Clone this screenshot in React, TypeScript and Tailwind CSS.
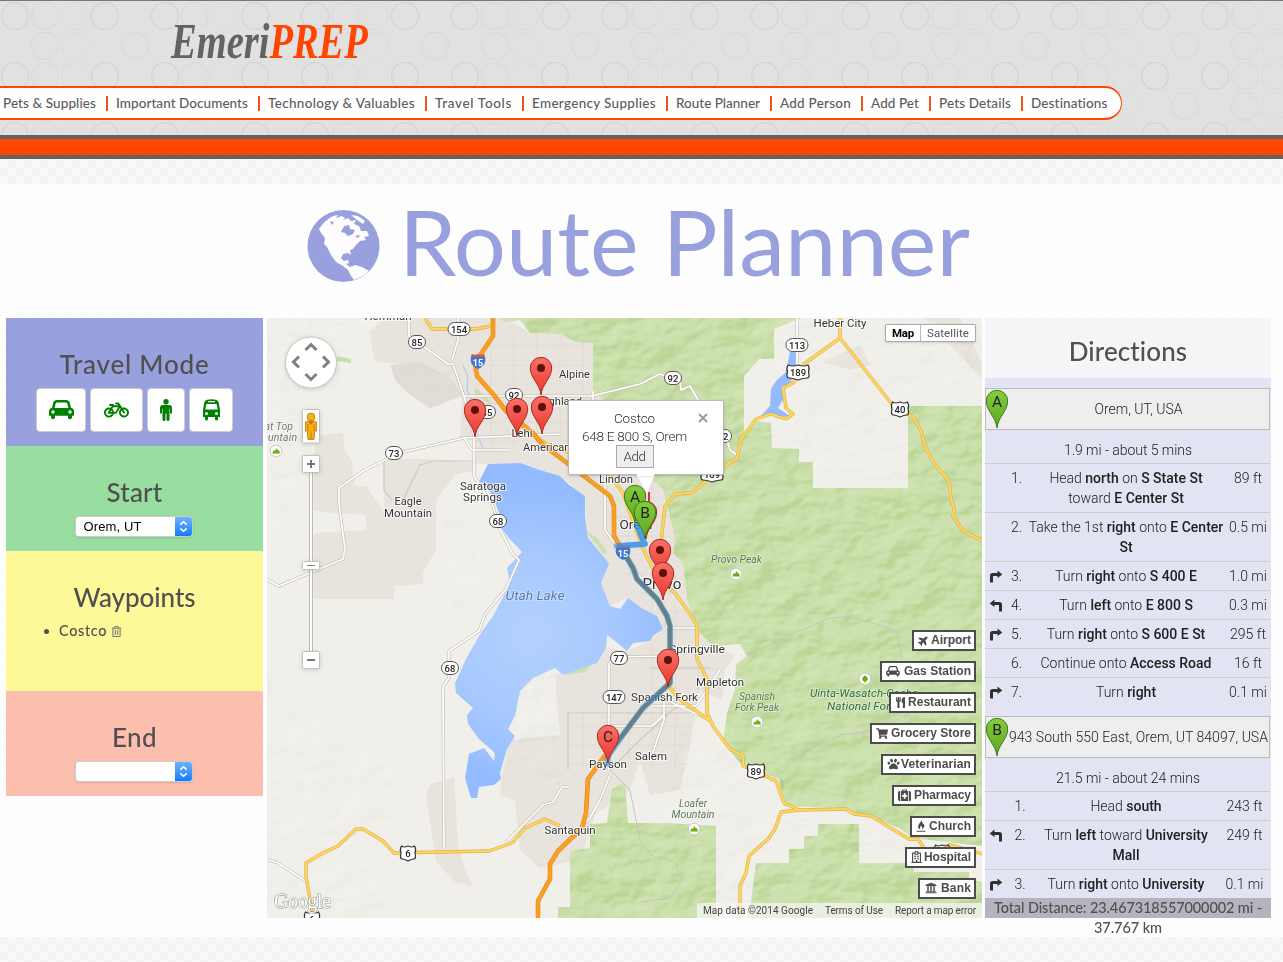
import React, { useLayoutEffect, useRef } from "react";
import {
  FaBicycle, FaPaw, FaPlane, FaRegHospital,
  FaRegTrashAlt, FaShoppingCart, FaUniversity, FaUtensils,
} from "react-icons/fa";

/* Text that is tracked out or in until it spans a given width. */
function Fit({ w, className = "", children }: { w: number; className?: string; children: React.ReactNode }) {
  const ref = useRef<HTMLSpanElement>(null);
  useLayoutEffect(() => {
    const el = ref.current;
    if (!el) return;
    el.style.letterSpacing = "0px";
    const n = (el.textContent || "").length;
    el.style.letterSpacing = (w - el.getBoundingClientRect().width) / n + "px";
  }, [w, children]);
  return <span ref={ref} className={"inline-block whitespace-nowrap " + className}>{children}</span>;
}

const NAV: [string, number, number][] = [
  ["Pets & Supplies", 93, 103], ["Important Documents", 132, 152], ["Technology & Valuables", 147, 167],
  ["Travel Tools", 77, 97], ["Emergency Supplies", 124, 144], ["Route Planner", 84, 104],
  ["Add Person", 71, 91], ["Add Pet", 48, 68], ["Pets Details", 72, 92], ["Destinations", 77, 97],
];

function Header() {
  return (
    <header className="relative flex h-[135px] w-full flex-col border-t border-[#777] bg-[#dfdfdf]">
      <svg className="absolute inset-0 h-full w-full" aria-hidden="true">
        <defs>
          <pattern id="rings" width="150" height="60" patternUnits="userSpaceOnUse">
            <g fill="none" stroke="#d3d3d3" strokeWidth="1.6">
              <circle cx="15" cy="15" r="13.5" /><circle cx="105" cy="15" r="13.5" />
              <g opacity=".55"><circle cx="45" cy="15" r="13.5" /><circle cx="45" cy="45" r="13.5" /><circle cx="135" cy="45" r="13.5" /></g>
              <g opacity=".3"><circle cx="75" cy="15" r="13.5" /><circle cx="75" cy="45" r="13.5" /></g>
            </g>
          </pattern>
          <pattern id="lines" width="4" height="2" patternUnits="userSpaceOnUse"><rect width="4" height="1" fill="#fff" opacity=".12" /></pattern>
        </defs>
        <rect width="100%" height="100%" fill="url(#rings)" />
        <rect width="100%" height="100%" fill="url(#lines)" />
      </svg>
      <div className="relative h-[85px] pl-[171px] pt-[13px]">
        <div className="inline-block origin-left scale-x-[.755] whitespace-nowrap font-['Liberation_Serif',serif] text-[51px] font-bold italic leading-[54px] text-[#636363]">
          Emeri<span className="text-[#ff4500]">PREP</span>
        </div>
      </div>
      <nav className="relative flex h-[34px] w-[1122px] items-center rounded-r-[17px] border-y-2 border-r border-[#ff4500] bg-white pl-[4px] font-[Lato,sans-serif] text-[13.5px] font-medium leading-[17px] text-[#5c5c5c]">
        {NAV.map(([t, w, box], i) => (
          <div key={t} className={i ? "flex h-[15px] shrink-0 items-center border-l-2 border-[#f4541c] pl-[9px]" : "flex shrink-0"} style={{ width: i ? box : box - 1 }}>
            <Fit w={w} className="-ml-px">{t}</Fit>
          </div>
        ))}
      </nav>
    </header>
  );
}

function Select({ value }: { value: string }) {
  return (
    <div className="mx-auto flex h-[21px] w-[118px] -translate-x-px overflow-hidden rounded-[4px] border border-[#0003] bg-white shadow-sm">
      <div className="flex-1 pl-[8px] text-left font-['Liberation_Sans',sans-serif] text-[13px] leading-[19px] text-black">{value && <Fit w={58}>{value}</Fit>}</div>
      <div className="flex w-[17px] items-center justify-center bg-linear-to-b from-[#6bb2fc] to-[#0a7bff]">
        <svg width="9" height="13" viewBox="0 0 9 13" fill="none" stroke="white" strokeWidth="1.5"><path d="M1.3 4.6 4.5 1.7 7.7 4.6M1.3 8.4 4.5 11.3 7.7 8.4" /></svg>
      </div>
    </div>
  );
}

function Heading({ w, children }: { w: number; children: string }) {
  return <h2 className="text-center font-[Lato,sans-serif] text-[26px] font-medium leading-[28px] text-[#505050]"><Fit w={w}>{children}</Fit></h2>;
}

const modeBtn = "flex h-[44px] items-center justify-center rounded-[4px] border border-[#ccc] bg-white text-[#008000]";

function Sidebar() {
  return (
    <aside className="w-[257px] shrink-0">
      <section className="h-[128px] bg-[#98a0dd] pt-[32px]">
        <Heading w={150}>Travel Mode</Heading>
        <div className="mt-[10px] flex gap-[4px] pl-[30px]">
          <div className={modeBtn + " w-[50px]"}><CarIcon className="h-[20px] w-[25px]" /></div>
          <div className={modeBtn + " w-[53px]"}><FaBicycle size={27} className="h-[20px]" /></div>
          <div className={modeBtn + " w-[38px]"}><ManIcon /></div>
          <div className={modeBtn + " w-[44px]"}><BusIcon /></div>
        </div>
      </section>
      <section className="h-[105px] bg-[#98dea1] pt-[32px]"><Heading w={56}>Start</Heading><div className="pt-[10px]"><Select value="Orem, UT" /></div></section>
      <section className="h-[140px] bg-[#fef998] pt-[32px]">
        <Heading w={122}>Waypoints</Heading>
        <div className="mt-[10px] flex h-[20px] items-center pl-[38px] font-[Lato,sans-serif] text-[14.5px] font-medium text-[#505050]">
          <span className="mr-[10px] h-[5px] w-[5px] rounded-full bg-[#505050]" /><Fit w={48}>Costco</Fit>
          <FaRegTrashAlt size={11} className="ml-[4px] text-[#777]" />
        </div>
      </section>
      <section className="h-[105px] bg-[#fcbfae] pt-[32px]"><Heading w={45}>End</Heading><div className="pt-[10px]"><Select value="" /></div></section>
    </aside>
  );
}

function GlobeIcon() {
  return (
    <svg viewBox="0 0 74 74" className="mr-[21px] mt-[25px] h-[74px] w-[74px]">
      <circle cx="36.500" cy="37" r="36" fill="currentColor" />
      <path fill="#fdfdfe" d="M12 20Q17 12 26 7L31 6 29 9 35 7 38 9 36 11 41 9 44 12 49 11 47 15 52 17 54 22 60 22 62 27 57 28 59 31 53 32 49 36 46 40 43 41 44 46 41 44 36 45 34 49 37 52 41 51 42 54 39 55 43 58 48 56 55 58 62 62Q56 68 47 71L44 67 41 61 36 57 29 53 24 46 20 38 17 35 18 29 14 24ZM44 6 51 7 58 12 56 15 50 11Z" />
      <path fill="currentColor" d="M37 17 42 16 43 20 48 21 46 25 41 27 38 24 34 23ZM23 12 27 13 25 16ZM48 27 53 26 51 29Z" />
    </svg>
  );
}
function CarIcon({ className }: { className: string }) {
  return (
    <svg viewBox="0 0 25 20" className={className} fill="currentColor">
      <path fillRule="evenodd" d="M8 0h9q3 0 3.7 2.6L22 8q3 .4 3 3.4v4.4h-2v1.4a1.9 1.9 0 0 1-4 0v-1.4H6v1.4a1.9 1.9 0 0 1-4 0v-1.4H0v-4.4Q0 8.4 3 8l1.3-5.4Q5 0 8 0Zm0 2.4q-1 0-1.3 1L5.500 8h14l-1.200-4.600q-.3-1-1.300-1ZM4 10.300a1.700 1.700 0 1 0 0 3.400 1.700 1.700 0 0 0 0-3.400Zm17 0a1.700 1.700 0 1 0 0 3.400 1.700 1.700 0 0 0 0-3.400Z" />
    </svg>
  );
}
function ManIcon() {
  return <svg width="14" height="22" viewBox="0 0 14 22" fill="currentColor"><circle cx="7" cy="2.800" r="2.700" /><path d="M4 6h6q3 0 3 3v4.500q0 1.200-1 1.200t-1-1.200V9.800h-.5v10.700q0 1.500-1.500 1.500t-1.500-1.500v-6h-1v6Q6.500 22 5 22t-1.500-1.500V9.800H3v3.700q0 1.200-1 1.200t-1-1.200V9q0-3 3-3Z" /></svg>;
}
function BusIcon() {
  return <svg width="19" height="22" viewBox="0 0 19 22" fill="currentColor"><path fillRule="evenodd" d="M5 .8Q9.500-.5 14 .8q2.500.7 2.800 3.200L18 11v7h-2v2a1.500 1.500 0 0 1-3 0v-2H6v2a1.500 1.500 0 0 1-3 0v-2H1v-7L2.200 4Q2.500 1.500 5 .8ZM6 2v1.200h7V2Zm-1.600 3L3.300 10.600h12.400L14.600 5ZM4.500 13a1.500 1.500 0 1 0 0 3 1.500 1.500 0 0 0 0-3Zm10 0a1.500 1.500 0 1 0 0 3 1.500 1.500 0 0 0 0-3Z" /></svg>;
}

function Pin({ x, y, letter, green }: { x: number; y: number; letter?: string; green?: boolean }) {
  return (
    <g transform={`translate(${x} ${y})`}>
      <path d="M0 0C-1-11-10.700-17-10.700-27A10.700 10.700 0 1 1 10.700-27C10.700-17 1-11 0 0Z" fill={green ? "url(#pg)" : "url(#pr)"} stroke={green ? "#3e7a16" : "#a52a22"} strokeWidth="1" />
      {letter ? <text y="-21.500" textAnchor="middle" fontSize="15.500" fontFamily="Roboto" fontWeight="400" fill="#222">{letter}</text> : <circle cy="-27" r="4" fill="#5e100c" />}
    </g>
  );
}
function PinDefs() {
  return (
    <>
      <linearGradient id="pg" x1="0" y1="0" x2="0" y2="1"><stop stopColor="#83cc3e" /><stop offset="1" stopColor="#5ea822" /></linearGradient>
      <linearGradient id="pr" x1="0" y1="0" x2="0" y2="1"><stop stopColor="#fa7168" /><stop offset="1" stopColor="#e9362c" /></linearGradient>
    </>
  );
}

const LAKE = "M488 464L520 463 537 469 560 476 568 484 585 496 585 516 588 538 603 556 609 564 601 583 610 606 620 609 628 598 643 609 657 616 663 629 653 636 650 641 633 643 627 651 615 641 607 635 606 648 597 663 563 675 555 668 533 678 520 691 515 716 508 729 515 736 507 749 500 773 501 779 494 785 479 787 477 798 471 798 465 778 469 754 484 748 494 761 495 754 493 751 479 739 468 724 467 715 473 708 456 693 455 683 466 659 479 636 493 616 500 603 510 584 507 568 522 552 507 536 500 526 499 513 493 496 484 484 479 482Z";
const GREEN = "M500 318L504 322 520 320 530 333 562 334 575 342 593 343 593 391 640 430 640 470 663 489 675 538 673 553 683 563 687 599 693 616 700 633 713 646 740 644 747 656 736 664 735 690 727 713 723 743 743 766 779 779 784 806 836 808 869 816 899 828 913 838 982 846 982 406 908 406 908 488 813 488 813 462 799 462 799 449 772 448 771 423 756 421 744 436 744 376 759 359 774 359 774 329 801 318ZM818 824L859 824 859 863 914 863 914 872 969 872 969 879 982 882 982 918 749 918 756 863 789 863 789 849 804 849 804 836 818 836ZM590 824L607 823 612 789 625 782 628 823 667 823 716 826 716 918 558 918 558 907 570 907 570 851 590 848Z";
const URBAN = "M369 332L385 318 505 318 530 333 562 334 593 343 593 391 640 430 640 470 663 489 675 538 673 553 683 563 687 599 693 616 700 633 713 646 735 655 725 670 722 700 700 690 690 745 680 790 650 795 640 760 630 790 615 800 595 815 580 860 540 868 520 850 515 800 500 795 502 775 510 740 560 735 555 675 597 663 606 648 627 651 650 641 663 629 643 609 628 598 610 606 601 583 609 564 588 538 585 496 560 476 520 463 488 464 474 463 474 437 460 437 462 400 450 378 420 365 375 362ZM314 449L320 435 343 433 345 450 352 461 355 486 366 486 384 512 384 459 433 459 474 463 475 470 455 475 436 500 436 549 423 573 423 584 394 586 394 599 314 599 314 533 366 530 366 515 330 513 314 510ZM431 784L454 777 458 845 465 870 473 886 455 882 436 862 426 795ZM823 362L860 345 870 365 850 370ZM925 318L960 318 983 365 983 380Z";
const I15 = "M493 316V336L483 351 475 363 477 376 493 394 506 411 533 433 542 444 567 463 610 496 614 506V536L620 546 633 568 637 579 657 599 667 616 670 626V683L643 708 622 736 603 758 588 779 586 813 582 828 558 851 550 864V879L538 901V920";
const YELLOW = "M840 316V338L891 403 914 418 921 431 926 449 936 466 949 481 951 499 954 508 953 516 963 531 983 541M840 338L804 364 793 383 783 388 786 408 793 414 786 419 771 414 756 419 741 439 737 458 713 474 692 493 675 494 665 506 662 533 660 560M506 411L520 425 545 443 575 455 610 475 623 493 643 549 653 569 662 583 675 593 690 614 697 626V659L707 679V713L713 726 730 749 743 756V766L761 774 776 781 784 803 799 810 846 809 854 814 871 816 909 839 918 839 926 851 950 845 983 854M799 810L781 812 775 829 769 838 749 856 746 873 740 886V918M668 686L682 701 710 721M313 918L306 876V863L323 853 338 846 356 829H363L383 841 394 853 489 851 512 843 525 828 545 819 560 826M425 318L432 329H475L492 326";
const WHITE = "M444 849L443 686 449 678V651L479 631 485 614 506 589 519 560 512 553 500 529 493 506 474 476V436L464 396 453 364H448L409 336V318M458 318V340L452 360M266 579L279 586 343 559 345 549 339 503 339 488 363 471 399 453 464 438 560 434M464 437L472 450H510M464 396H592L640 384 660 374 680 381 681 390 690 386 698 400 727 440 730 450 738 456M593 391V410L600 460 605 476V530L627 560 650 590 666 612 667 628H696M609 770V664L615 657 668 656M664 686V720L652 755 636 760M610 775L600 800 590 818 582 825M505 843L543 805 553 802 562 787 568 787M666 700L710 720M266 859L278 863 307 882M797 318V365M605 726H652L664 715M652 706H696L720 670";

function Shield({ x, y, t, us }: { x: number; y: number; t: string; us?: boolean }) {
  const w = t.length === 3 ? 22 : t.length === 2 ? 17 : 15;
  return (
    <g transform={`translate(${x} ${y})`}>
      {us
        ? <path d={`M${-w / 2 + 1}-7Q${-w / 4}-5 0-7Q${w / 4}-5 ${w / 2 - 1}-7Q${w / 2 + 1}-4 ${w / 2 - 0.5} 0Q${w / 2 + 1} 6 ${w / 2 - 2} 6Q${w / 4} 6 0 8Q${-w / 4} 6 ${-w / 2 + 2} 6Q${-w / 2 - 1} 6 ${-w / 2 + 0.5} 0Q${-w / 2 - 1}-4 ${-w / 2 + 1}-7Z`} fill="white" stroke="#333" strokeWidth="1.200" />
        : <rect x={-w / 2} y="-6.500" width={w} height="13" rx="6.500" fill="white" stroke="#555" />}
      {t && <text y="3.500" textAnchor="middle" fontSize="9.500" fontWeight="500" fill="#222">{t}</text>}
    </g>
  );
}
function Interstate({ x, y }: { x: number; y: number }) {
  return (
    <g transform={`translate(${x} ${y})`}>
      <path d="M-7-4Q-9 4 0 8Q9 4 7-4Z" fill="#3d78cc" /><path d="M-6-7Q-3-5.500 0-7Q3-5.500 6-7L7.300-4H-7.300Z" fill="#d5555b" />
      <text y="4.500" textAnchor="middle" fontSize="9" fontWeight="700" fill="white">15</text>
    </g>
  );
}

const TOWNS: [string, number, number, number, number?][] = [
  ["Herriman", 388, 320, 47], ["Alpine", 574.5, 378, 31], ["Highland", 560, 405, 44], ["Lehi", 522, 437, 21], ["American Fork", 559, 451, 72],
  ["Lindon", 616, 483, 34], ["Saratoga", 483, 490, 46], ["Springs", 482.5, 501, 39], ["Eagle", 408, 505, 27], ["Mountain", 408, 517, 48],
  ["Orem", 636, 529, 33, 12.5], ["Provo", 662, 589, 39, 14], ["Springville", 697, 653, 56], ["Mapleton", 720, 686, 48],
  ["Spanish Fork", 664.5, 701, 67], ["Salem", 651, 760, 32], ["Payson", 608, 768, 38], ["Santaquin", 570, 834, 51], ["Heber City", 840, 327, 53],
];
const PEAKS: [string, number, number, number][] = [
  ["Provo Peak", 736.5, 563, 51], ["Spanish", 757, 700, 36], ["Fork Peak", 757, 711, 44], ["Loafer", 693, 807, 28], ["Mountain", 693, 818, 43],
];

function MapDrawing() {
  return (
    <svg className="absolute inset-0" width="715" height="600" viewBox="267 318 715 600" fontFamily="Roboto, sans-serif">
      <defs>
        <PinDefs />
        <radialGradient id="water" gradientUnits="userSpaceOnUse" cx="530" cy="635" r="150"><stop stopColor="#b3d0ff" /><stop offset=".5" stopColor="#a9caff" /><stop offset="1" stopColor="#94bbff" /></radialGradient>
        <filter id="relief" x="0" y="0" width="100%" height="100%" colorInterpolationFilters="sRGB">
          <feTurbulence type="fractalNoise" baseFrequency="0.03 0.045" numOctaves="3" seed="8" />
          <feDiffuseLighting surfaceScale="8" diffuseConstant="1" lightingColor="#fff"><feDistantLight azimuth="225" elevation="30" /></feDiffuseLighting>
        </filter>
        <clipPath id="forest"><path d={GREEN} /></clipPath>
        <clipPath id="hills"><path d="M267 318H350L340 380 320 420 290 500 270 560ZM390 365H455L460 395 430 408 400 390ZM440 490L470 520 490 620 450 610ZM267 660L310 720 400 760 390 918H267ZM515 680L555 668 560 790 520 760ZM680 730L784 780V820L740 918 716 918V826L660 815ZM750 430H770V320H982V406H908V480H813V450ZM780 815L900 830 910 870H850V824L780 860Z" /></clipPath>
        <pattern id="streets" width="23" height="19" patternUnits="userSpaceOnUse"><path d="M0 4H23M8 0V19" stroke="#d8d2c8" strokeWidth=".8" fill="none" /></pattern>
      </defs>
      <rect x="267" y="318" width="715" height="600" fill="#f0efea" />
      <path d={URBAN} fill="#e8e3dc" />
      <path d="M475 330H590V450H475ZM605 480H665L672 550 680 600 690 640 720 655V690H650V650L640 600 610 540ZM570 712H690V770H570Z" fill="url(#streets)" opacity=".6" />
      <path d={GREEN} fill="#cadfaa" />
      <g clipPath="url(#hills)" className="opacity-20 mix-blend-soft-light"><rect x="267" y="318" width="715" height="600" filter="url(#relief)" /></g>
      <g clipPath="url(#forest)" className="opacity-35 mix-blend-soft-light"><rect x="267" y="318" width="715" height="600" filter="url(#relief)" /></g>
      <path d="M390 365L420 362 450 378 462 395 440 405 430 408 410 395 395 380Z" fill="#d9d4cd" opacity=".7" />
      <path d="M337 356l14 3v4l-14-2ZM475 387l15 14v4l-15-12ZM585 530l12 8 10 14-3 2ZM563 675l30-12-8 9Z" fill="#c8dfae" />
      <path d={LAKE} fill="url(#water)" />
      <path d="M790 352L796 352 796 366 791 382 784 390 783 400 778 408 790 416 782 417 770 413 757 420 770 406 771 389 776 381 786 372Z" fill="#94bbff" />
      <path d="M463 365l5 12-1 12 7 18 1 22 9 22" fill="none" stroke="#a4c7f5" strokeWidth="1" />
      <path d="M747 655L770 645 790 635 830 618 850 617 880 625 897 632 902 660M770 782L800 755 840 735 880 730 930 700M610 770L630 790 640 840 650 855 675 862 682 880 670 898 640 902" fill="none" stroke="#c9c4bb" strokeWidth="1" />
      <path d="M568 770V713H690M610 726H650L680 705M384 459V490L392 500M403 500L420 465 433 461H475M610 770L640 740 668 715M650 668H710" fill="none" stroke="#cfc9bf" strokeWidth="1.200" />
      <path d={WHITE} fill="none" stroke="#c5c0b5" strokeWidth="3" strokeLinejoin="round" />
      <path d={WHITE} fill="none" stroke="#fff" strokeWidth="1.700" strokeLinejoin="round" />
      <path d={YELLOW} fill="none" stroke="#dfb04a" strokeWidth="3.400" strokeLinejoin="round" />
      <path d={YELLOW} fill="none" stroke="#fed55d" strokeWidth="2.200" strokeLinejoin="round" />
      <path d={I15} fill="none" stroke="#df8a1a" strokeWidth="4.600" strokeLinejoin="round" />
      <path d={I15} fill="none" stroke="#fb9e25" strokeWidth="3.400" strokeLinejoin="round" />
      <Interstate x={478} y={361} />
      <Shield x={459} y={329} t="154" /><Shield x={417} y={342} t="85" /><Shield x={394} y={453} t="73" /><Shield x={498} y={521} t="68" /><Shield x={450} y={668} t="68" />
      <Shield x={487} y={412} t="85" /><Shield x={514} y={395} t="92" /><Shield x={673} y={378} t="92" /><Shield x={723} y={436} t="92" /><Shield x={619} y={658} t="77" /><Shield x={614} y={697} t="147" /><Shield x={797} y={345} t="113" />
      <Shield us x={798} y={372} t="189" /><Shield us x={900} y={409} t="40" /><Shield us x={408} y={853} t="6" /><Shield us x={756} y={771} t="89" /><Shield us x={712} y={474} t="189" /><Shield us x={312} y={919} t="6" /><Shield us x={942} y={852} t="" />
      <g fill="#333" stroke="#fff" strokeOpacity=".75" strokeWidth="2" paintOrder="stroke" textAnchor="middle">
        {TOWNS.map(([t, x, y, w, s]) => <text key={t + y} x={x} y={y} fontSize={s || 11} textLength={w} lengthAdjust="spacingAndGlyphs">{t}</text>)}
      </g>
      <g fontStyle="italic" textAnchor="middle" fontSize="10.500" fill="#5d7a56" stroke="#fff" strokeOpacity=".4" strokeWidth="1.500" paintOrder="stroke">
        {PEAKS.map(([t, x, y, w]) => <text key={t + y} x={x} y={y} textLength={w} lengthAdjust="spacingAndGlyphs">{t}</text>)}
        <text x="535" y="600" fontSize="12.500" fill="#5a7ba8" textLength="59" lengthAdjust="spacingAndGlyphs">Utah Lake</text>
        <text x="262" y="430" textAnchor="start" fill="#777" textLength="31">lat Top</text>
        <text x="253" y="441" textAnchor="start" fill="#777" textLength="44">Mountain</text>
        <text x="810" y="697" textAnchor="start" fill="#2e7043" fontSize="11" textLength="108" lengthAdjust="spacingAndGlyphs">Uinta-Wasatch-Cache</text>
        <text x="827" y="710" textAnchor="start" fill="#2e7043" fontSize="11" textLength="79" lengthAdjust="spacingAndGlyphs">National Forest</text>
      </g>
      {[[276, 451], [736, 574], [757, 722], [694, 829]].map(([x, y]) => <g key={x} transform={`translate(${x} ${y})`}><circle r="5.800" fill="white" stroke="#bbb" strokeWidth=".7" /><path d="M-4 2.500-2-1-1 0 .5-3 2-.5 3-1 4 2.500Z" fill="#70ad13" /></g>)}
      <g transform="translate(865 679)"><circle r="5.800" fill="white" stroke="#bbb" strokeWidth=".7" /><path d="M0-3.800 2-2 3 0 2 2H.7V3.800H-.7V2H-2L-3 0-2-2Z" fill="#70ad13" /></g>
      <path d="M636 523L643 540 645 544 620 546 633 568 637 579 657 599 667 616 670 626V683L643 708 622 736 608 756 607 766" fill="none" stroke="#2f91eb" strokeOpacity=".6" strokeWidth="6" strokeLinejoin="round" />
      <path d="M625 555L633 568 637 579 657 599 667 616 670 626V683L643 708 622 736 610 752" fill="none" stroke="#5a7784" strokeOpacity=".75" strokeWidth="3.500" strokeLinejoin="round" />
      <Interstate x={623} y={552} />
      <path d="M636 523L643 540 645 544 614 546" fill="none" stroke="#2f91eb" strokeOpacity=".6" strokeWidth="5" strokeLinejoin="round" />
      <Pin x={541} y={395} /><Pin x={542} y={434} /><Pin x={517} y={436} /><Pin x={475} y={437} />
      <Pin x={660} y={577} /><Pin x={663} y={600} /><Pin x={668} y={687} /><Pin x={608} y={763} letter="C" />
      <path d="M649 492V502" stroke="#d3323a" strokeWidth="2" />
      <Pin x={646} y={539} /><Pin x={635} y={523} letter="A" green /><Pin x={645} y={539} letter="B" green />
      <path d="M636 474L647 493 655 474Z" fill="#fff" />

      <circle cx="311" cy="362.500" r="25.500" fill="#fff" stroke="#bbb" strokeWidth=".8" className="drop-shadow-sm" />
      <path d="M305.500 350 311 344.500 316.500 350M305.500 374 311 379.500 316.500 374M299 356.500 293.500 362 299 367.500M323 356.500 328.500 362 323 367.500" fill="none" stroke="#808080" strokeWidth="3" />
      <rect x="309.500" y="470" width="3" height="184" fill="#fff" stroke="#aaa" strokeWidth=".8" />
      <g fill="#fff" stroke="#b5b5b5" strokeWidth=".8" className="drop-shadow-sm">
        <rect x="302.500" y="409.500" width="17" height="33.500" rx="1" /><rect x="302.500" y="455.500" width="17" height="17" rx="1" /><rect x="302.500" y="651.500" width="17" height="17" rx="1" /><rect x="302.500" y="561.500" width="17" height="8" rx="1" />
      </g>
      <path d="M307 464H315M311 460V468M307 660H315" stroke="#777" strokeWidth="2" /><path d="M307 565.500H315" stroke="#888" />
      <g fill="#f9b112" stroke="#b87610" strokeWidth=".8"><path d="M305.500 422Q311 419.500 316.500 422V431H314.800L314 439.500H308L307.200 431H305.500Z" /><circle cx="311" cy="417" r="3.900" /><path d="M308.500 421.500H313.500L311 425Z" fill="#e65b30" stroke="none" /><path d="M311 431V439M308 424V431M314 424V431" /></g>
      <text x="274" y="908" textLength="57" fontFamily="Liberation Serif, serif" fontSize="20" fill="#fff" stroke="#999" strokeWidth="1.200" paintOrder="stroke">Google</text>
    </svg>
  );
}

const ic = "h-[12px] w-[13px]";
const PLACES: [string, number, number, React.ReactNode][] = [
  ["Airport", 64, 40, <FaPlane className="h-[11px] w-[11px] -rotate-45" />], ["Gas Station", 96, 67, <CarIcon className="h-[11px] w-[14px]" />],
  ["Restaurant", 87, 63, <FaUtensils className="h-[11px] w-[11px]" />], ["Grocery Store", 106, 80, <FaShoppingCart className="h-[11px] w-[12px]" />],
  ["Veterinarian", 95, 70, <FaPaw className={ic} />],
  ["Pharmacy", 84, 57, <svg viewBox="0 0 13 12" className={ic} fill="currentColor"><path fillRule="evenodd" d="M4 2V.5H9V2H10V12H3V2ZM5 2H8V1.500H5ZM5.800 4V6H4V7.800H5.800V9.800H7.500V7.800H9.200V6H7.500V4ZM0 3.500Q0 2 1.500 2H2.200V12H1.500Q0 12 0 10.500ZM10.800 2H11.500Q13 2 13 3.500V10.500Q13 12 11.500 12H10.800Z" /></svg>],
  ["Church", 66, 42, <svg viewBox="0 0 10 12" className="h-[12px] w-[10px]" fill="currentColor"><path d="M6 0Q5 2 7.500 4T6 9.500Q7 7 4.800 5.500 3.500 8 4.500 9.500 1 8 2.500 5 4 2.500 6 0ZM.5 10.800H9.500V11.800H.5Z" /></svg>],
  ["Hospital", 71, 47, <FaRegHospital className="h-[12px] w-[11px]" />], ["Bank", 58, 30, <FaUniversity className="h-[12px] w-[14px]" />],
];

function MapPanel() {
  return (
    <main className="relative ml-[4px] h-[600px] w-[715px] shrink-0 overflow-hidden bg-[#f0efea]">
      <MapDrawing />
      <div className="absolute left-[301px] top-[82px] flex h-[75px] w-[156px] flex-col items-center rounded-[2px] border border-[#bbb] bg-white pr-[23px] pt-[8px] font-[Roboto,sans-serif] text-[13.500px] font-light leading-[18px] text-[#333] shadow-[0_1px_3px_#0003]">
        <Fit w={41}>Costco</Fit><Fit w={105}>648 E 800 S, Orem</Fit>
        <div className="h-[23px] w-[38px] border border-[#aaa] bg-[#eee] text-center leading-[21px]"><Fit w={22}>Add</Fit></div>
        <svg className="absolute right-[15px] top-[12px]" width="10" height="10"><path d="M1 1 9 9M9 1 1 9" stroke="#999" strokeWidth="1.800" /></svg>
      </div>
      <div className="absolute left-[370px] top-[155px] h-[3px] w-[17px] bg-white" />
      <div className="absolute right-[6px] top-[6px] flex h-[18px] rounded-[1px] border border-[#aaa] bg-white font-[Roboto,sans-serif] text-[11.500px] leading-[17px] shadow-sm">
        <div className="w-[34px] pl-[6px] font-bold text-black"><Fit w={22}>Map</Fit></div>
        <div className="w-[55px] border-l border-[#bbb] pl-[6px] text-[#555]"><Fit w={42}>Satellite</Fit></div>
      </div>
      <div className="absolute right-[6px] top-[312px] flex flex-col items-end gap-[10px]">
        {PLACES.map(([t, bw, tw, icon]) => (
          <div key={t} className="flex h-[21px] items-center justify-between border-2 border-[#4c4c4c] bg-white pb-[1px] pl-[4px] pr-[3px] font-['Liberation_Sans',sans-serif] text-[12px] font-bold leading-[16px] text-[#4c4c4c]" style={{ width: bw }}>
            {icon}<Fit w={tw}>{t}</Fit>
          </div>
        ))}
      </div>
      <div className="absolute bottom-0 right-0 flex h-[15px] w-[285px] bg-[#f5f5f5]/75 font-[Roboto,sans-serif] text-[10px] leading-[15px] text-[#444]">
        <div className="w-[122px] pl-[6px]"><Fit w={110}>Map data ©2014 Google</Fit></div>
        <div className="w-[70px] pl-[6px]"><Fit w={58}>Terms of Use</Fit></div>
        <div className="pl-[6px]"><Fit w={81}>Report a map error</Fit></div>
      </div>
    </main>
  );
}

type Step = [string, React.ReactNode, string, ("left" | "right" | null)];
const B = ({ children }: { children: React.ReactNode }) => <b className="font-medium">{children}</b>;
const LEG1: Step[] = [
  ["1.", <>Head <B>north</B> on <B>S State St</B><br />toward <B>E Center St</B></>, "89 ft", null],
  ["2.", <>Take the 1st <B>right</B> onto <B>E Center</B><br /><B>St</B></>, "0.5 mi", null],
  ["3.", <>Turn <B>right</B> onto <B>S 400 E</B></>, "1.0 mi", "right"], ["4.", <>Turn <B>left</B> onto <B>E 800 S</B></>, "0.3 mi", "left"],
  ["5.", <>Turn <B>right</B> onto <B>S 600 E St</B></>, "295 ft", "right"], ["6.", <>Continue onto <B>Access Road</B></>, "16 ft", null],
  ["7.", <>Turn <B>right</B></>, "0.1 mi", "right"],
];
const LEG2: Step[] = [
  ["1.", <>Head <B>south</B></>, "243 ft", null], ["2.", <>Turn <B>left</B> toward <B>University</B><br /><B>Mall</B></>, "249 ft", "left"],
  ["3.", <>Turn <B>right</B> onto <B>University</B></>, "0.1 mi", "right"],
];

function Steps({ steps, second }: { steps: Step[]; second?: boolean }) {
  return (
    <>
      {steps.map(([n, text, d, turn]) => (
        <div key={n} className="flex w-[285px] border-t border-[#cdcdcd] py-[4px]">
          <div className="w-[22px] pl-[4px] pt-[4px]">
            {turn && <svg width="14" height="13" viewBox="0 0 14 13" className={turn === "left" ? "-scale-x-100" : ""}><path d="M2.500 12.500V5.700Q2.500 4.500 3.700 4.500H9" fill="none" stroke="#303030" strokeWidth="3" /><path d="M8.500.5 13.300 4.500 8.500 8Z" fill="#303030" /></svg>}
          </div>
          <div className={second ? "w-[26px] text-center" : "w-[19px] text-center"}>{n}</div>
          <div className={second ? "w-[186px] whitespace-nowrap text-center" : "w-[200px] whitespace-nowrap text-center"}>{text}</div>
          <div className={second ? "w-[51px] whitespace-nowrap text-center" : "w-[44px] whitespace-nowrap text-center"}>{d}</div>
        </div>
      ))}
    </>
  );
}

function Place({ letter, name, w }: { letter: string; name: string; w: number }) {
  return (
    <div className="flex h-[42px] w-[285px] items-center border border-[#bbb] bg-[#eee]">
      <svg width="22" height="40" viewBox="-11 -39 22 40"><Pin x={0} y={0} letter={letter} green /></svg>
      <div className="flex-1 text-center"><Fit w={w}>{name}</Fit></div>
    </div>
  );
}

function Directions() {
  return (
    <aside className="ml-[3px] w-[286px] shrink-0">
      <div className="h-[60px] bg-[#f5f5f7] pt-[19px]"><Heading w={119}>Directions</Heading></div>
      <div className="h-[520px] overflow-hidden bg-[#e2e3f3] pt-[10px] font-[Roboto,sans-serif] text-[14px] font-light leading-[20px] text-[#222]">
        <Place letter="A" name="Orem, UT, USA" w={88} />
        <div className="h-[33px] pt-[10px] text-center"><Fit w={128}>1.9 mi - about 5 mins</Fit></div>
        <Steps steps={LEG1} />
        <div className="h-[10px]" />
        <Place letter="B" name="943 South 550 East, Orem, UT 84097, USA" w={259} />
        <div className="h-[33px] pt-[10px] text-center"><Fit w={144}>21.5 mi - about 24 mins</Fit></div>
        <Steps steps={LEG2} second />
      </div>
      <div className="h-[20px] bg-[#b4b4be] text-center font-[Lato,sans-serif] text-[14.500px] font-medium leading-[20px] text-[#505050]">
        <Fit w={268}>Total Distance: 23.467318557000002 mi -</Fit><br /><Fit w={68}>37.767 km</Fit>
      </div>
    </aside>
  );
}

export default function App() {
  return (
    <div className="h-[962px] w-[1283px] overflow-hidden bg-[conic-gradient(#f3f3f3_25%,#f9f9f9_0_50%,#f3f3f3_0_75%,#f9f9f9_0)] bg-[length:16px_16px]">
      <Header />
      <div className="h-[24px] border-y-4 border-[#636363] bg-[#ff4500]" />
      <div className="mt-[25px] h-[753px] bg-white/80">
        <h1 className="flex h-[134px] items-start pl-[307px] font-[Lato,sans-serif] text-[92px] leading-[110px] text-[#98a0dd]">
          <GlobeIcon /><Fit w={571} className="-ml-[3px] mt-[2px]">Route Planner</Fit>
        </h1>
        <div className="flex pl-[6px]"><Sidebar /><MapPanel /><Directions /></div>
      </div>
    </div>
  );
}
